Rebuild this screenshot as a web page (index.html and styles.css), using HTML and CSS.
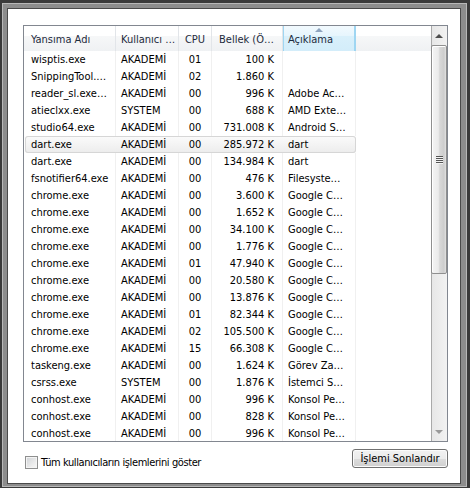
FILE: index.html
```html
<!DOCTYPE html>
<html lang="tr">
<head>
<meta charset="utf-8">
<title>Görev Yöneticisi</title>
<link rel="stylesheet" href="styles.css">
</head>
<body>
<div class="frame">
  <div class="panel">
    <div class="list">
      <div class="main">
        <div class="header">
          <div class="h c1">Yansıma Adı</div>
          <div class="h c2">Kullanıcı …</div>
          <div class="h c3">CPU</div>
          <div class="h c4">Bellek (Ö…</div>
          <div class="h c5 sorted"><span class="sort-arrow"></span>Açıklama</div>
          <div class="h c6"></div>
        </div>
        <div class="rows">
          <div class="row"><div class="cell c1">wisptis.exe</div><div class="cell c2">AKADEMİ</div><div class="cell c3">01</div><div class="cell c4">100 K</div><div class="cell c5"></div></div>
          <div class="row"><div class="cell c1">SnippingTool.…</div><div class="cell c2">AKADEMİ</div><div class="cell c3">02</div><div class="cell c4">1.860 K</div><div class="cell c5"></div></div>
          <div class="row"><div class="cell c1">reader_sl.exe…</div><div class="cell c2">AKADEMİ</div><div class="cell c3">00</div><div class="cell c4">996 K</div><div class="cell c5">Adobe Ac…</div></div>
          <div class="row"><div class="cell c1">atieclxx.exe</div><div class="cell c2">SYSTEM</div><div class="cell c3">00</div><div class="cell c4">688 K</div><div class="cell c5">AMD Exte…</div></div>
          <div class="row"><div class="cell c1">studio64.exe</div><div class="cell c2">AKADEMİ</div><div class="cell c3">00</div><div class="cell c4">731.008 K</div><div class="cell c5">Android S…</div></div>
          <div class="row sel"><div class="cell c1">dart.exe</div><div class="cell c2">AKADEMİ</div><div class="cell c3">00</div><div class="cell c4">285.972 K</div><div class="cell c5">dart</div></div>
          <div class="row"><div class="cell c1">dart.exe</div><div class="cell c2">AKADEMİ</div><div class="cell c3">00</div><div class="cell c4">134.984 K</div><div class="cell c5">dart</div></div>
          <div class="row"><div class="cell c1">fsnotifier64.exe</div><div class="cell c2">AKADEMİ</div><div class="cell c3">00</div><div class="cell c4">476 K</div><div class="cell c5">Filesyste…</div></div>
          <div class="row"><div class="cell c1">chrome.exe</div><div class="cell c2">AKADEMİ</div><div class="cell c3">00</div><div class="cell c4">3.600 K</div><div class="cell c5">Google C…</div></div>
          <div class="row"><div class="cell c1">chrome.exe</div><div class="cell c2">AKADEMİ</div><div class="cell c3">00</div><div class="cell c4">1.652 K</div><div class="cell c5">Google C…</div></div>
          <div class="row"><div class="cell c1">chrome.exe</div><div class="cell c2">AKADEMİ</div><div class="cell c3">00</div><div class="cell c4">34.100 K</div><div class="cell c5">Google C…</div></div>
          <div class="row"><div class="cell c1">chrome.exe</div><div class="cell c2">AKADEMİ</div><div class="cell c3">00</div><div class="cell c4">1.776 K</div><div class="cell c5">Google C…</div></div>
          <div class="row"><div class="cell c1">chrome.exe</div><div class="cell c2">AKADEMİ</div><div class="cell c3">01</div><div class="cell c4">47.940 K</div><div class="cell c5">Google C…</div></div>
          <div class="row"><div class="cell c1">chrome.exe</div><div class="cell c2">AKADEMİ</div><div class="cell c3">00</div><div class="cell c4">20.580 K</div><div class="cell c5">Google C…</div></div>
          <div class="row"><div class="cell c1">chrome.exe</div><div class="cell c2">AKADEMİ</div><div class="cell c3">00</div><div class="cell c4">13.876 K</div><div class="cell c5">Google C…</div></div>
          <div class="row"><div class="cell c1">chrome.exe</div><div class="cell c2">AKADEMİ</div><div class="cell c3">01</div><div class="cell c4">82.344 K</div><div class="cell c5">Google C…</div></div>
          <div class="row"><div class="cell c1">chrome.exe</div><div class="cell c2">AKADEMİ</div><div class="cell c3">02</div><div class="cell c4">105.500 K</div><div class="cell c5">Google C…</div></div>
          <div class="row"><div class="cell c1">chrome.exe</div><div class="cell c2">AKADEMİ</div><div class="cell c3">15</div><div class="cell c4">66.308 K</div><div class="cell c5">Google C…</div></div>
          <div class="row"><div class="cell c1">taskeng.exe</div><div class="cell c2">AKADEMİ</div><div class="cell c3">00</div><div class="cell c4">1.624 K</div><div class="cell c5">Görev Za…</div></div>
          <div class="row"><div class="cell c1">csrss.exe</div><div class="cell c2">SYSTEM</div><div class="cell c3">00</div><div class="cell c4">1.876 K</div><div class="cell c5">İstemci S…</div></div>
          <div class="row"><div class="cell c1">conhost.exe</div><div class="cell c2">AKADEMİ</div><div class="cell c3">00</div><div class="cell c4">996 K</div><div class="cell c5">Konsol Pe…</div></div>
          <div class="row"><div class="cell c1">conhost.exe</div><div class="cell c2">AKADEMİ</div><div class="cell c3">00</div><div class="cell c4">828 K</div><div class="cell c5">Konsol Pe…</div></div>
          <div class="row"><div class="cell c1">conhost.exe</div><div class="cell c2">AKADEMİ</div><div class="cell c3">00</div><div class="cell c4">996 K</div><div class="cell c5">Konsol Pe…</div></div>
        </div>
      </div>
      <div class="scrollbar">
        <div class="sb-btn"><span class="arrow-up"></span></div>
        <div class="track"><div class="thumb"><div class="grip"><i></i><i></i><i></i><i></i></div></div></div>
        <div class="sb-btn"><span class="arrow-down"></span></div>
      </div>
    </div>
    <div class="bottom">
      <label class="chk"><span class="box"></span><span class="chk-label">Tüm kullanıcıların işlemlerini göster</span></label>
      <button class="btn" type="button">İşlemi Sonlandır</button>
    </div>
  </div>
</div>
</body>
</html>
```
FILE: styles.css
```css
* { box-sizing: border-box; }
html, body { margin: 0; padding: 0; }
body {
  width: 470px;
  height: 488px;
  overflow: hidden;
  background: #3a3a3a;
  font-family: "DejaVu Sans Condensed", "DejaVu Sans", sans-serif;
  font-stretch: condensed;
  font-size: 11px;
  color: #000;
}
.frame {
  margin: 3px 3px 0 2px;
  height: 484px;
  border: 1px solid #b8b8b8;
  background: #8d8d8d;
  padding: 4px 5px 2px 4px;
}
.panel {
  height: 476px;
  border: 1px solid #4a4a4a;
  background: #fff;
  padding: 16px 12px 0 15px;
}
.list {
  height: 417px;
  border: 1px solid #828790;
  display: flex;
  background: #fff;
}
.main {
  flex: 0 0 407px;
  overflow: hidden;
}
.header {
  display: flex;
  height: 25px;
  background: linear-gradient(#ffffff 0%, #ffffff 42%, #f6f7f8 42%, #eff1f3 100%);
}
.h {
  height: 25px;
  padding-top: 7px;
  line-height: 13px;
  border-right: 1px solid #e2e5e9;
  white-space: nowrap;
  overflow: hidden;
  color: #1e2b3c;
}
.c1 { flex: 0 0 92px; padding-left: 7px; }
.c2 { flex: 0 0 63px; padding-left: 5px; }
.c3 { flex: 0 0 33px; text-align: center; }
.c4 { flex: 0 0 71px; text-align: right; padding-right: 8px; }
.c5 { flex: 0 0 73px; padding-left: 5px; }
.c6 { flex: 1 1 auto; border-right: none; }
.h.c4 { text-align: left; padding-left: 7px; padding-right: 0; }
.h.sorted {
  position: relative;
  background: linear-gradient(#f2fafe 0%, #e6f5fd 42%, #d9f0fb 42%, #d3edfa 100%);
  box-shadow: inset 1px 0 0 #9fd6f2, inset -1px 0 0 #9fd6f2;
  border-right-color: #9fd6f2;
}
.sort-arrow {
  position: absolute;
  top: 2px;
  left: 32px;
  width: 0;
  height: 0;
  border-left: 4px solid transparent;
  border-right: 4px solid transparent;
  border-bottom: 4px solid #8ea4be;
}
.row {
  display: flex;
  height: 17px;
}
.cell {
  height: 17px;
  padding-top: 1px;
  line-height: 16px;
  border-right: 1px solid #f0f0f0;
  white-space: nowrap;
  overflow: hidden;
}
.row.sel {
  margin-left: 1px;
  width: 331px;
  border-radius: 3px;
  background: linear-gradient(#fbfbfb, #ececec);
  box-shadow: inset 0 0 0 1px #d6d6d6;
}
.row.sel .cell { border-right-color: transparent; }
.row.sel .c1 { flex-basis: 91px; padding-left: 6px; }
.scrollbar {
  flex: 0 0 16px;
  display: flex;
  flex-direction: column;
  background: linear-gradient(to right, #e6e6e6, #f2f2f2);
  box-shadow: inset 1px 0 0 #a9a9a9;
}
.sb-btn {
  flex: 0 0 19px;
  display: flex;
  align-items: center;
  justify-content: center;
}
.arrow-up {
  width: 0; height: 0;
  border-left: 4px solid transparent;
  border-right: 4px solid transparent;
  border-bottom: 4px solid #4d4d4d;
}
.arrow-down {
  width: 0; height: 0;
  border-left: 4px solid transparent;
  border-right: 4px solid transparent;
  border-top: 4px solid #9a9a9a;
}
.track {
  flex: 1 1 auto;
}
.thumb {
  height: 229px;
  border: 1px solid #8f8f8f;
  border-radius: 2px;
  background: linear-gradient(to right, #f4f4f4 0%, #ebebeb 45%, #d8d8d8 55%, #cdcdcd 85%, #e2e2e2 100%);
  box-shadow: inset 1px 1px 0 #ffffff;
  display: flex;
  align-items: center;
  justify-content: center;
}
.grip {
  display: flex;
  flex-direction: column;
  gap: 1px;
}
.grip i {
  display: block;
  width: 7px;
  height: 1px;
  background: #555;
  box-shadow: 0 1px 0 #f4f4f4;
}
.bottom {
  display: flex;
  justify-content: space-between;
  align-items: flex-start;
  margin-top: 7px;
}
.chk {
  display: flex;
  align-items: center;
  margin: 7px 0 0 2px;
}
.box {
  width: 13px;
  height: 13px;
  border: 1px solid #8e8f8f;
  background: linear-gradient(135deg, #cfd2d6 0%, #eeeeee 70%, #f6f6f6 100%);
  box-shadow: inset 0 0 0 1px #f4f4f4;
}
.chk-label {
  margin-left: 3px;
  line-height: 13px;
  letter-spacing: -0.4px;
}
.btn {
  width: 96px;
  height: 19px;
  padding: 0;
  border: 1px solid #707070;
  border-radius: 3px;
  background: linear-gradient(#f2f2f2 0%, #ebebeb 50%, #dddddd 50%, #cfcfcf 100%);
  box-shadow: inset 0 0 0 1px #fbfbfb;
  font-family: inherit;
  font-stretch: condensed;
  font-size: 11px;
  color: #000;
  line-height: 17px;
}
```
